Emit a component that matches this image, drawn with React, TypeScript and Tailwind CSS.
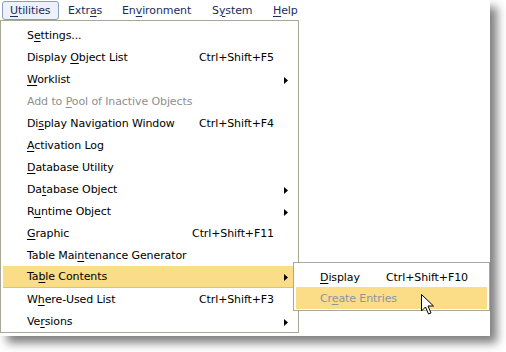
import React from "react";

type Item = {
  label: string;
  u: number; // index of the mnemonic letter
  shortcut?: string;
  sub?: boolean;
  disabled?: boolean;
  active?: boolean;
};

const items: Item[] = [
  { label: "Settings...", u: 1 },
  { label: "Display Object List", u: 8, shortcut: "Ctrl+Shift+F5" },
  { label: "Worklist", u: 0, sub: true },
  { label: "Add to Pool of Inactive Objects", u: 7, disabled: true },
  { label: "Display Navigation Window", u: 2, shortcut: "Ctrl+Shift+F4" },
  { label: "Activation Log", u: 0 },
  { label: "Database Utility", u: 0 },
  { label: "Database Object", u: 2, sub: true },
  { label: "Runtime Object", u: 1, sub: true },
  { label: "Graphic", u: 0, shortcut: "Ctrl+Shift+F11" },
  { label: "Table Maintenance Generator", u: 9 },
  { label: "Table Contents", u: 2, sub: true, active: true },
  { label: "Where-Used List", u: 1, shortcut: "Ctrl+Shift+F3" },
  { label: "Versions", u: 2, sub: true },
];

function Mnemonic({ text, u }: { text: string; u: number }) {
  return (
    <span className="whitespace-pre">
      {text.slice(0, u)}
      <span className="underline underline-offset-[2px]">{text[u]}</span>
      {text.slice(u + 1)}
    </span>
  );
}

function Arrow() {
  return (
    <svg width="4" height="7" viewBox="0 0 4 7" className="block">
      <path d="M0 0 L4 3.5 L0 7 Z" fill="#000" />
    </svg>
  );
}

function MenuRow({ item }: { item: Item }) {
  return (
    <div
      className={
        "flex h-[22px] items-center pt-[2px] pr-[10px] " +
        (item.active
          ? "ml-[2px] border-b border-[#c9c3a8] bg-[#fbdc87] pl-[24px]"
          : "pl-[26px]") +
        (item.disabled ? " text-[#8f8f8f]" : " text-black")
      }
    >
      <span className="flex-1">
        <Mnemonic text={item.label} u={item.u} />
      </span>
      {item.shortcut ? <span className="mr-[14px]">{item.shortcut}</span> : null}
      {item.sub ? <Arrow /> : null}
    </div>
  );
}

export default function App() {
  return (
    <div
      className="relative h-[352px] w-[506px] overflow-hidden bg-white text-[11px] tracking-[-0.1px]"
      style={{ fontFamily: '"DejaVu Sans", Tahoma, sans-serif' }}
    >
      <div className="relative h-[336px] w-[490px] bg-white shadow-[7px_7px_9px_rgba(0,0,0,0.5)]">
        {/* menu bar */}
        <div className="flex h-[20px] items-center text-[#1c2c5e]">
          <div className="ml-[2px] flex h-[19px] w-[57px] items-center rounded-[3px] border border-[#8d9cbc] bg-[#edf1f8] pl-[7px] pt-[2px]">
            <Mnemonic text="Utilities" u={0} />
          </div>
          <div className="ml-[9px] w-[54px] pt-[2px]">
            <Mnemonic text="Extras" u={4} />
          </div>
          <div className="w-[90px] pt-[2px]">
            <Mnemonic text="Environment" u={2} />
          </div>
          <div className="w-[61px] pt-[2px]">
            <Mnemonic text="System" u={1} />
          </div>
          <div className="pt-[2px]">
            <Mnemonic text="Help" u={0} />
          </div>
        </div>

        {/* dropdown */}
        <div className="absolute left-0 top-[20px] w-[299px] border border-[#a9a797] bg-white pt-[3px]">
          {items.map((item) => (
            <MenuRow key={item.label} item={item} />
          ))}
        </div>

        {/* submenu */}
        <div className="absolute left-[293px] top-[262px] w-[197px] border border-[#a8a8a0] bg-white px-[2px] pb-[1px]">
          <div className="flex h-[24px] items-center pl-[24px] pt-[6px] text-black">
            <span className="w-[66px]">
              <Mnemonic text="Display" u={0} />
            </span>
            <span>Ctrl+Shift+F10</span>
          </div>
          <div className="flex h-[22px] items-center bg-[#fbdc87] pl-[24px] pt-[2px] text-[#8b94a6]">
            <Mnemonic text="Create Entries" u={2} />
          </div>
        </div>

        {/* mouse cursor */}
        <svg
          width="14"
          height="22"
          viewBox="0 0 14 22"
          className="absolute left-[421px] top-[294px]"
        >
          <path
            d="M0.5 0.5 L0.5 17 L4.5 13 L7.5 20 L10 19 L7 12 L12.5 12 Z"
            fill="#fff"
            stroke="#000"
            strokeWidth="1"
          />
        </svg>
      </div>
    </div>
  );
}
